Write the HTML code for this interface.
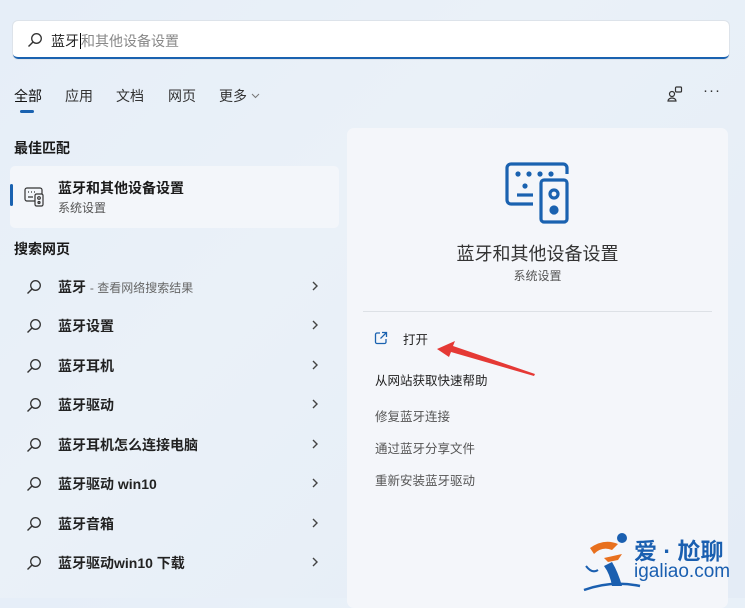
<!DOCTYPE html>
<html><head><meta charset="utf-8"><style>
*{margin:0;padding:0;box-sizing:border-box}
body{width:745px;height:598px;overflow:hidden;position:relative;background:linear-gradient(135deg,#e6eef8 0%,#eaf1f8 40%,#e4ecf6 100%);font-family:"Liberation Sans","Noto Sans CJK SC",sans-serif;color:#1a1a1a}
.a{position:absolute;white-space:nowrap}
.search{left:13px;top:21px;width:716px;height:38px;background:#fff;border-radius:5px;border-bottom:2px solid #1a62b0;box-shadow:0 0 0 1px #dde3ea}
.tab{top:86px;font-size:14px;color:#333}
.row{left:0;width:340px;height:39px}
.row .t{position:absolute;left:58px;top:10px;font-size:14px;font-weight:bold;color:#222}
.row svg.s{position:absolute;left:26px;top:12px}
.row .c{position:absolute;left:311px;top:13px}
.card{left:347px;top:128px;width:381px;height:480px;background:#f4f6fa;border-radius:7px}
.lnk{left:375px;font-size:12.5px;color:#333}
</style></head><body>
<div class="a search"></div>
<svg class="a" style="left:27px;top:32px" width="16" height="16" viewBox="0 0 16 16"><circle cx="9.5" cy="6.5" r="4.8" fill="none" stroke="#333" stroke-width="1.3"/><path d="M6 10 L1.5 14.5" stroke="#333" stroke-width="1.4"/></svg>
<div class="a" style="left:51px;top:31px;font-size:14px;color:#222">蓝牙<span style="border-left:1px solid #000;margin-left:1px"></span><span style="color:#888">和其他设备设置</span></div>

<div class="a tab" style="left:14px;color:#111">全部</div>
<div class="a" style="left:20px;top:110px;width:14px;height:3px;background:#1a62b0;border-radius:2px"></div>
<div class="a tab" style="left:65px">应用</div>
<div class="a tab" style="left:116px">文档</div>
<div class="a tab" style="left:168px">网页</div>
<div class="a tab" style="left:219px">更多</div>
<svg class="a" style="left:251px;top:93px" width="9" height="6" viewBox="0 0 9 6"><path d="M1 1l3.5 3.5L8 1" fill="none" stroke="#777" stroke-width="1"/></svg>
<svg class="a" style="left:666px;top:85px" width="18" height="18" viewBox="0 0 18 18" fill="none" stroke="#333" stroke-width="1.2"><circle cx="6" cy="9" r="2.5"/><path d="M2 16 a4 3 0 0 1 8 0 Z"/><rect x="9.5" y="2" width="6" height="5" rx="1"/></svg>
<div class="a" style="left:703px;top:82px;font-size:15px;color:#333;letter-spacing:1px">···</div>

<div class="a" style="left:14px;top:138px;font-size:14px;font-weight:bold">最佳匹配</div>
<div class="a" style="left:10px;top:166px;width:329px;height:62px;background:#f3f6fa;border-radius:5px"></div>
<div class="a" style="left:10px;top:184px;width:3px;height:22px;background:#1a62b0;border-radius:2px"></div>
<svg class="a" style="left:24px;top:186px" width="22" height="22" viewBox="0 0 22 22" fill="none" stroke="#333" stroke-width="1.2"><rect x="1" y="2" width="17" height="13" rx="2"/><rect x="11" y="8" width="8" height="12" rx="1.5" fill="#f3f6fa"/><circle cx="15" cy="12" r="1.3"/><circle cx="15" cy="16.5" r="1"/><path d="M4 6h1M7 6h1M10 6h1M4 11h5"/></svg>
<div class="a" style="left:58px;top:178px;font-size:14px;font-weight:bold">蓝牙和其他设备设置</div>
<div class="a" style="left:58px;top:199px;font-size:12px;color:#555">系统设置</div>

<div class="a" style="left:14px;top:239px;font-size:14px;font-weight:bold">搜索网页</div>

<div class="a row" style="top:267px"><svg class="s" width="16" height="16" viewBox="0 0 16 16"><circle cx="9.5" cy="6.5" r="4.8" fill="none" stroke="#333" stroke-width="1.3"/><path d="M6 10 L1.5 14.5" stroke="#333" stroke-width="1.4"/></svg><div class="t">蓝牙 <span style="font-weight:normal;font-size:12px;color:#666">- 查看网络搜索结果</span></div><svg class="c" width="8" height="12" viewBox="0 0 8 12"><path d="M2 2l4 4-4 4" fill="none" stroke="#444" stroke-width="1.4"/></svg></div>
<div class="a row" style="top:306px"><svg class="s" width="16" height="16" viewBox="0 0 16 16"><circle cx="9.5" cy="6.5" r="4.8" fill="none" stroke="#333" stroke-width="1.3"/><path d="M6 10 L1.5 14.5" stroke="#333" stroke-width="1.4"/></svg><div class="t">蓝牙设置</div><svg class="c" width="8" height="12" viewBox="0 0 8 12"><path d="M2 2l4 4-4 4" fill="none" stroke="#444" stroke-width="1.4"/></svg></div>
<div class="a row" style="top:346px"><svg class="s" width="16" height="16" viewBox="0 0 16 16"><circle cx="9.5" cy="6.5" r="4.8" fill="none" stroke="#333" stroke-width="1.3"/><path d="M6 10 L1.5 14.5" stroke="#333" stroke-width="1.4"/></svg><div class="t">蓝牙耳机</div><svg class="c" width="8" height="12" viewBox="0 0 8 12"><path d="M2 2l4 4-4 4" fill="none" stroke="#444" stroke-width="1.4"/></svg></div>
<div class="a row" style="top:385px"><svg class="s" width="16" height="16" viewBox="0 0 16 16"><circle cx="9.5" cy="6.5" r="4.8" fill="none" stroke="#333" stroke-width="1.3"/><path d="M6 10 L1.5 14.5" stroke="#333" stroke-width="1.4"/></svg><div class="t">蓝牙驱动</div><svg class="c" width="8" height="12" viewBox="0 0 8 12"><path d="M2 2l4 4-4 4" fill="none" stroke="#444" stroke-width="1.4"/></svg></div>
<div class="a row" style="top:425px"><svg class="s" width="16" height="16" viewBox="0 0 16 16"><circle cx="9.5" cy="6.5" r="4.8" fill="none" stroke="#333" stroke-width="1.3"/><path d="M6 10 L1.5 14.5" stroke="#333" stroke-width="1.4"/></svg><div class="t">蓝牙耳机怎么连接电脑</div><svg class="c" width="8" height="12" viewBox="0 0 8 12"><path d="M2 2l4 4-4 4" fill="none" stroke="#444" stroke-width="1.4"/></svg></div>
<div class="a row" style="top:464px"><svg class="s" width="16" height="16" viewBox="0 0 16 16"><circle cx="9.5" cy="6.5" r="4.8" fill="none" stroke="#333" stroke-width="1.3"/><path d="M6 10 L1.5 14.5" stroke="#333" stroke-width="1.4"/></svg><div class="t">蓝牙驱动 win10</div><svg class="c" width="8" height="12" viewBox="0 0 8 12"><path d="M2 2l4 4-4 4" fill="none" stroke="#444" stroke-width="1.4"/></svg></div>
<div class="a row" style="top:504px"><svg class="s" width="16" height="16" viewBox="0 0 16 16"><circle cx="9.5" cy="6.5" r="4.8" fill="none" stroke="#333" stroke-width="1.3"/><path d="M6 10 L1.5 14.5" stroke="#333" stroke-width="1.4"/></svg><div class="t">蓝牙音箱</div><svg class="c" width="8" height="12" viewBox="0 0 8 12"><path d="M2 2l4 4-4 4" fill="none" stroke="#444" stroke-width="1.4"/></svg></div>
<div class="a row" style="top:543px"><svg class="s" width="16" height="16" viewBox="0 0 16 16"><circle cx="9.5" cy="6.5" r="4.8" fill="none" stroke="#333" stroke-width="1.3"/><path d="M6 10 L1.5 14.5" stroke="#333" stroke-width="1.4"/></svg><div class="t">蓝牙驱动win10 下载</div><svg class="c" width="8" height="12" viewBox="0 0 8 12"><path d="M2 2l4 4-4 4" fill="none" stroke="#444" stroke-width="1.4"/></svg></div>

<div class="a card"></div>
<svg class="a" style="left:505px;top:162px" width="68" height="62" viewBox="0 0 68 62" fill="none" stroke="#1a62b0" stroke-width="3.2"><path d="M28 42 H6 a4 4 0 0 1 -4 -4 V6 a4 4 0 0 1 4 -4 H58 a4 4 0 0 1 4 4 V12"/><rect x="36" y="18" width="26" height="42" rx="3"/><circle cx="49" cy="32" r="4"/><circle cx="49" cy="48" r="3" fill="#1a62b0"/><g fill="#1a62b0" stroke="none"><circle cx="13" cy="12" r="2.6"/><circle cx="24" cy="12" r="2.6"/><circle cx="35" cy="12" r="2.6"/><circle cx="46" cy="12" r="2.6"/><circle cx="20" cy="24" r="2.6"/></g><path d="M12 33 H28"/></svg>
<div class="a" style="left:347px;width:381px;text-align:center;top:240px;font-size:18px;color:#333">蓝牙和其他设备设置</div>
<div class="a" style="left:347px;width:381px;text-align:center;top:267px;font-size:12px;color:#555">系统设置</div>
<div class="a" style="left:363px;top:311px;width:349px;height:1px;background:#dde1e6"></div>
<svg class="a" style="left:374px;top:331px" width="14" height="14" viewBox="0 0 14 14" fill="none" stroke="#1a62b0" stroke-width="1.3"><path d="M6 2H3a1.5 1.5 0 0 0-1.5 1.5v7.5A1.5 1.5 0 0 0 3 12.5h7.5A1.5 1.5 0 0 0 12 11V8M8 1.5h4.5V6M12.5 1.5L6.5 7.5"/></svg>
<div class="a" style="left:403px;top:329px;font-size:12.5px;color:#222">打开</div>
<svg class="a" style="left:435px;top:340px" width="102" height="36" viewBox="0 0 102 36"><path d="M2 9 L20 1 L18 6 L100 34 L99 36 L16 12 L14 17 Z" fill="#e53935"/></svg>
<div class="a lnk" style="top:370px;color:#222">从网站获取快速帮助</div>
<div class="a lnk" style="top:406px;color:#555">修复蓝牙连接</div>
<div class="a lnk" style="top:438px;color:#555">通过蓝牙分享文件</div>
<div class="a lnk" style="top:470px;color:#555">重新安装蓝牙驱动</div>

<svg class="a" style="left:582px;top:530px" width="60" height="62" viewBox="0 0 60 62"><circle cx="40" cy="8" r="5" fill="#1a5fb0"/><path d="M8 18 Q22 8 36 14 L30 20 Q20 16 12 24 Z" fill="#e8701e"/><path d="M22 28 L40 24 L36 30 L26 32 Z" fill="#e8701e"/><path d="M30 32 Q36 42 40 56 L30 56 Q28 44 22 36 Z" fill="#1a5fb0"/><path d="M2 60 Q30 50 58 56" stroke="#1a5fb0" stroke-width="2.5" fill="none"/><path d="M4 36 Q10 44 16 40" stroke="#1a5fb0" stroke-width="2" fill="none"/></svg>
<div class="a" style="left:634px;top:532px;font-size:23px;font-weight:bold;color:#1a5fb0">爱 · 尬聊</div>
<div class="a" style="left:634px;top:561px;font-size:19px;color:#1a5fb0">igaliao.com</div>
</body></html>
